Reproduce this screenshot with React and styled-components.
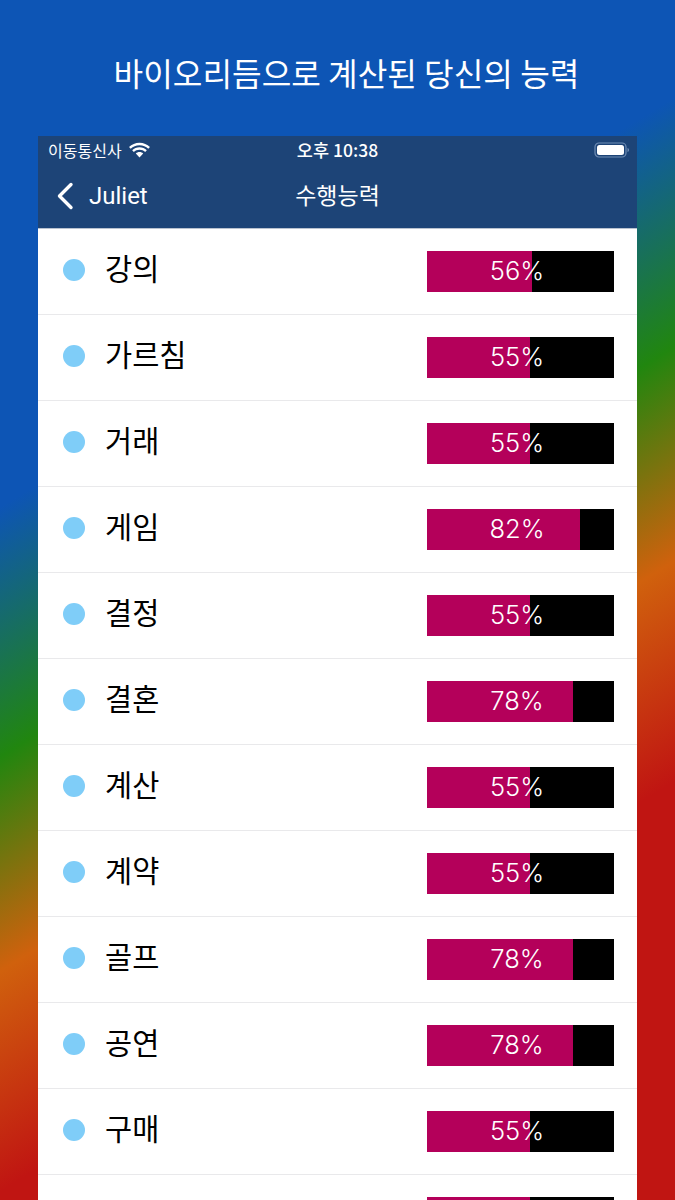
import React from "react";
import styled, { createGlobalStyle } from "styled-components";

const Global = createGlobalStyle`
  html, body { margin: 0; padding: 0; height: 1200px; overflow: hidden; }
  body { font-family: "Inter", "Noto Sans CJK KR", sans-serif; }
`;

const Page = styled.div`
  width: 675px;
  height: 1200px;
  overflow: hidden;
  background: linear-gradient(148.7deg, #0d55b5 0%, #0d55b5 31.5%, #21860f 47%, #d0610d 60.3%, #c01512 74%, #c01512 100%);
`;

const Headline = styled.h1`
  margin: 0;
  height: 136px;
  padding: 49px 0 0 18px;
  box-sizing: border-box;
  text-align: center;
  color: #fff;
  font: 400 32.200px/46px "Noto Sans CJK KR", sans-serif;
`;

const Phone = styled.div`
  margin: 0 38px;
  background: #fff;
`;

const Header = styled.header`
  height: 92px;
  background: #1d4477;
  color: #fff;
  border-bottom: 1px solid #b9c2cf;
`;

const StatusBar = styled.div`
  height: 28px;
  padding: 0 7px 0 10px;
  display: grid;
  grid-template-columns: 1fr auto 1fr;
  align-items: center;
  font: 400 16px/28px "Noto Sans CJK KR", sans-serif;
`;

const Carrier = styled.div`
  display: flex;
  align-items: center;
  gap: 6px;
`;

const Clock = styled.div`
  margin-right: 3px;
  font-size: 17.500px;
  font-weight: 500;
`;

const Battery = styled.svg`
  justify-self: end;
`;

const NavBar = styled.nav`
  height: 64px;
  display: grid;
  grid-template-columns: 1fr auto 1fr;
  align-items: center;
  padding: 0 18px;
`;

const Back = styled.div`
  display: flex;
  align-items: center;
  gap: 15px;
  font: 400 24px/30px "Roboto", sans-serif;
`;

const Title = styled.div`
  margin-bottom: 4px;
  font: 400 23px/30px "Noto Sans CJK KR", sans-serif;
`;

const Row = styled.div`
  height: 86px;
  box-sizing: border-box;
  border-bottom: 1px solid #e9e9eb;
  padding: 0 23px 0 25px;
  display: flex;
  align-items: center;
`;

const Dot = styled.span`
  width: 22px;
  height: 22px;
  margin-bottom: 4px;
  border-radius: 50%;
  background: #7fcdf8;
  flex: none;
`;

const Name = styled.span`
  margin: 0 0 9px 20px;
  flex: 1;
  color: #000;
  font: 400 29.500px/40px "Noto Sans CJK KR", sans-serif;
`;

const Bar = styled.div`
  position: relative;
  width: 187px;
  height: 41px;
  margin-bottom: 1px;
  background: #000;
`;

const Fill = styled.div`
  height: 100%;
  background: #b4005a;
`;

const Percent = styled.span`
  position: absolute;
  inset: 0;
  padding-right: 7px;
  text-align: center;
  color: #fff;
  font: 300 25.500px/39px "Inter", sans-serif;
`;

const rows = [
  ["강의", 56], ["가르침", 55], ["거래", 55], ["게임", 82], ["결정", 55], ["결혼", 78],
  ["계산", 55], ["계약", 55], ["골프", 78], ["공연", 78], ["구매", 55],
];

export default function App() {
  return (
    <Page>
      <Global />
      <Headline>바이오리듬으로 계산된 당신의 능력</Headline>
      <Phone>
        <Header>
          <StatusBar>
            <Carrier>
              이동통신사
              <svg width="23" height="17" viewBox="0 0 22 16" fill="#fff">
                <path d="M11 3c3.300 0 6.200 1.300 8.400 3.400l1.600-1.700C18.400 2.200 14.900.6 11 .6S3.600 2.200 1 4.700l1.600 1.700C4.800 4.300 7.700 3 11 3z" />
                <path d="M11 7.400c2.100 0 4 .8 5.400 2.100l1.600-1.700C16.200 6.100 13.700 5 11 5S5.800 6.100 4 7.800l1.600 1.700C7 8.200 8.900 7.400 11 7.400z" />
                <path d="M11 9.500c-1.400 0-2.600.5-3.500 1.400L11 14.600l3.500-3.700c-.9-.9-2.100-1.400-3.500-1.400z" />
              </svg>
            </Carrier>
            <Clock>오후 10:38</Clock>
            <Battery width="36" height="18" viewBox="0 0 36 18">
              <rect x="1" y="2" width="31" height="14" rx="4" fill="none" stroke="#6f8db5" strokeWidth="1.200" />
              <rect x="3" y="4" width="27" height="10" rx="2.500" fill="#fff" />
              <path d="M33.500 7v4c1-.3 1.500-1 1.500-2s-.5-1.700-1.500-2z" fill="#6f8db5" />
            </Battery>
          </StatusBar>
          <NavBar>
            <Back>
              <svg width="18" height="28" viewBox="0 0 18 28" fill="none" stroke="#fff" strokeWidth="3.400" strokeLinecap="round" strokeLinejoin="round">
                <path d="M15 2.500 3.500 14 15 25.500" />
              </svg>
              Juliet
            </Back>
            <Title>수행능력</Title>
          </NavBar>
        </Header>
        {rows.map(([name, pct], i) => (
          <Row key={i}>
            <Dot />
            <Name>{name}</Name>
            <Bar>
              <Fill style={{ width: `${pct}%` }} />
              <Percent>{pct}%</Percent>
            </Bar>
          </Row>
        ))}
        <Row>
          <Dot />
          <Name />
          <Bar>
            <Fill style={{ width: "55%" }} />
          </Bar>
        </Row>
      </Phone>
    </Page>
  );
}
